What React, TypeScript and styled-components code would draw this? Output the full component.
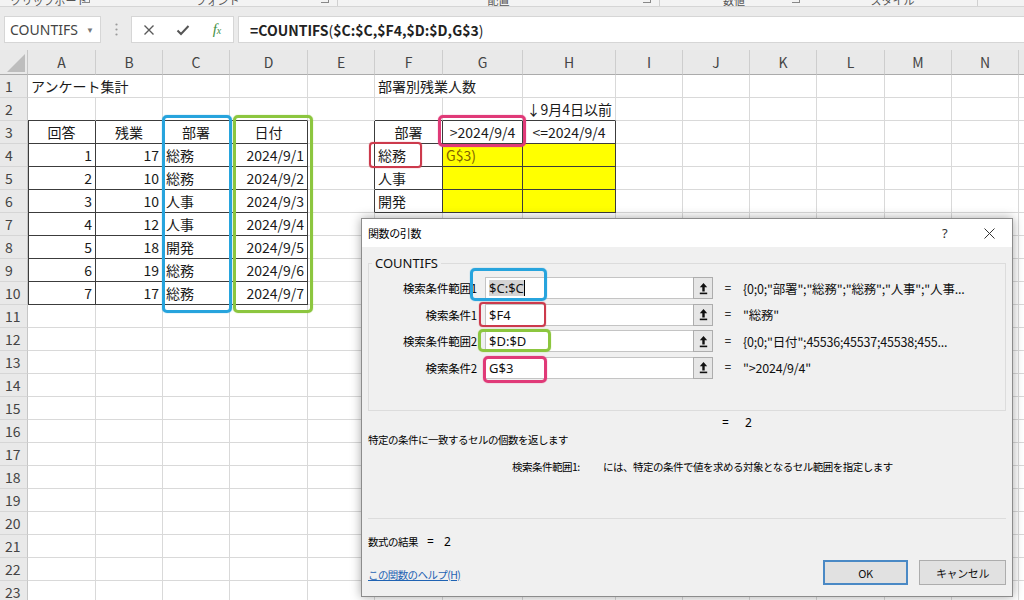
import React from 'react';
import styled, { createGlobalStyle } from 'styled-components';

const GlobalStyle = createGlobalStyle`
  html, body { margin: 0; padding: 0; background: #fff; }
  body { width: 1024px; height: 600px; overflow: hidden; font-family: "Noto Sans CJK JP", "Noto Sans", sans-serif; }
  * { box-sizing: border-box; }
`;

const CJK = `"Noto Sans CJK JP", "Noto Sans", sans-serif`;

const Root = styled.div`
  position: relative;
  width: 1024px;
  height: 600px;
  overflow: hidden;
  background: #fff;
  display: flex;
  flex-direction: column;
`;

/* ---------- ribbon strip (cut off at the top of the shot) ---------- */
const Ribbon = styled.div`
  height: 7px;
  flex: none;
  background: #f3f3f3;
  border-bottom: 1px solid #d5d5d5;
  overflow: hidden;
  display: flex;
  align-items: flex-start;
`;
const RibbonGroup = styled.div<{ $w: number }>`
  width: ${p => p.$w}px;
  flex: none;
  position: relative;
  display: flex;
  justify-content: center;
  border-right: ${p => (p.$w > 150 ? '1px solid #d0d0d0' : 'none')};
  height: 6px;
`;
const RibbonLabel = styled.span`
  font-family: ${CJK};
  font-size: 11px;
  line-height: 12px;
  color: #555;
  margin-top: -6px;
  white-space: nowrap;
`;
const Launcher = styled.span`
  position: absolute;
  right: 8px;
  top: -5px;
  width: 8px;
  height: 8px;
  border-right: 1px solid #888;
  border-bottom: 1px solid #888;
`;

/* ---------- formula bar ---------- */
const FormulaBar = styled.div`
  height: 43px;
  flex: none;
  background: #ebebeb;
  display: flex;
  align-items: stretch;
  padding: 9px 0 7px 4px;
`;
const NameBox = styled.div`
  width: 97px;
  background: #fff;
  border: 1px solid #d6d6d6;
  display: flex;
  align-items: center;
  padding-left: 5px;
  font-family: "Noto Sans", sans-serif;
  font-size: 14px;
  color: #444;
`;
const Caret = styled.span`
  margin-left: auto;
  margin-right: 6px;
  font-size: 8px;
  color: #777;
`;
const Grip = styled.div`
  width: 30px;
  display: flex;
  align-items: center;
  justify-content: center;
`;
const IconBox = styled.div`
  width: 103px;
  background: #fff;
  border: 1px solid #d6d6d6;
  display: flex;
  align-items: center;
  padding-left: 10px;
  gap: 20px;
`;
const IconSlot = styled.span`
  width: 14px;
  height: 16px;
  display: flex;
  align-items: center;
  justify-content: center;
`;
const Fx = styled.span`
  font-family: "Liberation Serif", serif;
  font-style: italic;
  color: #3f8f45;
  font-size: 15px;
  line-height: 16px;
  display: flex;
  align-items: baseline;
`;
const FxSub = styled.span`
  font-size: 10px;
`;
const FormulaInput = styled.div`
  flex: 1;
  margin-left: 4px;
  background: #fff;
  border: 1px solid #d6d6d6;
  border-right: none;
  display: flex;
  align-items: center;
  padding-left: 11px;
  font-family: ${CJK};
  font-size: 14px;
  color: #222;
  white-space: nowrap;
`;
const Strong = styled.span`
  font-weight: 700;
`;

/* ---------- sheet ---------- */
const COLS: [string, number][] = [
  ['A', 68], ['B', 67], ['C', 67], ['D', 78], ['E', 67], ['F', 68], ['G', 80], ['H', 93],
  ['I', 67], ['J', 67], ['K', 67], ['L', 68], ['M', 67], ['N', 67], ['O', 67],
];
const ROWS = 23;

const Sheet = styled.div`
  flex: none;
  display: grid;
  grid-template-columns: 28px ${COLS.map(c => c[1] + 'px').join(' ')};
  grid-template-rows: 25px repeat(${ROWS}, 23px);
  width: ${28 + COLS.reduce((s, c) => s + c[1], 0)}px;
`;
const Corner = styled.div`
  background: #e9e9e9;
  border-right: 1px solid #c6c6c6;
  border-bottom: 1px solid #ababab;
  display: flex;
  align-items: flex-end;
  justify-content: flex-end;
  padding: 0 2px 2px 0;
`;
const ColHead = styled.div`
  background: #e9e9e9;
  border-right: 1px solid #cdcdcd;
  border-bottom: 1px solid #ababab;
  font-family: ${CJK};
  font-size: 14px;
  color: #444;
  display: flex;
  align-items: center;
  justify-content: center;
`;
const RowHead = styled.div`
  background: #e9e9e9;
  border-right: 1px solid #c6c6c6;
  border-bottom: 1px solid #d6d6d6;
  font-family: ${CJK};
  font-size: 14px;
  color: #444;
  display: flex;
  align-items: center;
  padding-left: 5px;
`;
const Cell = styled.div<{
  $align: string; $bg?: string; $br: string; $bb: string; $bl?: boolean; $span?: number; $color?: string;
}>`
  grid-column: span ${p => p.$span || 1};
  background: ${p => p.$bg || 'transparent'};
  border-right: 1px solid ${p => p.$br};
  border-bottom: 1px solid ${p => p.$bb};
  box-shadow: ${p => (p.$bl ? 'inset 1px 0 0 #3c3c3c' : 'none')};
  font-family: ${CJK};
  font-size: 14px;
  line-height: 22px;
  padding: 0 3px;
  text-align: ${p => p.$align};
  white-space: nowrap;
  overflow: hidden;
  color: ${p => p.$color || '#1a1a1a'};
`;

const Mark = styled.div<{ $x: number; $y: number; $w: number; $h: number; $c: string; $b?: number; $r?: number }>`
  position: absolute;
  left: ${p => p.$x}px;
  top: ${p => p.$y}px;
  width: ${p => p.$w}px;
  height: ${p => p.$h}px;
  border: ${p => p.$b || 3}px solid ${p => p.$c};
  border-radius: ${p => p.$r || 5}px;
  box-shadow: 0 0 1px ${p => p.$c};
  pointer-events: none;
`;

/* ---------- dialog ---------- */
const Dialog = styled.div`
  position: absolute;
  left: 361px;
  top: 218px;
  width: 652px;
  height: 379px;
  background: #f0f0f0;
  border: 1px solid #8c8c8c;
  box-shadow: 0 0 10px rgba(0, 0, 0, 0.35);
  display: flex;
  flex-direction: column;
  font-family: ${CJK};
  color: #000;
`;
const TitleBar = styled.div`
  height: 28px;
  flex: none;
  background: #fff;
  display: flex;
  align-items: center;
  padding-left: 6px;
  font-size: 11px;
  letter-spacing: -0.4px;
`;
const TitleBtn = styled.span`
  width: 45px;
  height: 28px;
  display: flex;
  align-items: center;
  justify-content: center;
  font-family: "Noto Sans", sans-serif;
  font-size: 13px;
  color: #333;
`;
const TitleBtns = styled.div`
  margin-left: auto;
  display: flex;
`;
const Body = styled.div`
  flex: 1;
  display: flex;
  flex-direction: column;
  padding: 0 6px 11px 6px;
`;
const Group = styled.fieldset`
  margin: 9px 0 0;
  padding: 0 0 31px;
  border: 1px solid #dcdcdc;
  min-width: 0;
`;
const Legend = styled.legend`
  margin-left: 3px;
  padding: 0 3px;
  font-family: "Noto Sans", sans-serif;
  font-size: 13px;
  line-height: 14px;
  color: #111;
`;
const ArgGrid = styled.div`
  display: grid;
  grid-template-columns: 116px 208px 20px 30px 1fr;
  grid-auto-rows: 22px;
  row-gap: 4.5px;
  padding-top: 7px;
  align-items: center;
`;
const ArgLabel = styled.div`
  text-align: right;
  padding-right: 8px;
  font-size: 11.5px;
  letter-spacing: -0.2px;
  white-space: nowrap;
`;
const ArgInput = styled.div`
  height: 22px;
  background: #fff;
  border: 1px solid #c4c4c4;
  border-right: none;
  display: flex;
  align-items: center;
  padding-left: 3px;
  font-family: "Noto Sans", sans-serif;
  font-size: 13px;
  color: #111;
`;
const Selected = styled.span`
  background: #d4d4d4;
  border-right: 1px solid #000;
  line-height: 16px;
`;
const RefButton = styled.div`
  height: 22px;
  background: #e6e6e6;
  border: 1px solid #adadad;
  display: flex;
  align-items: center;
  justify-content: center;
`;
const Eq = styled.div`
  text-align: center;
  font-family: "Noto Sans", sans-serif;
  font-size: 12px;
  color: #333;
`;
const ArgValue = styled.div`
  font-size: 12.5px;
  letter-spacing: -0.2px;
  white-space: nowrap;
  overflow: hidden;
  color: #111;
`;
const ResultRow = styled.div`
  margin-top: 3px;
  height: 18px;
  display: flex;
  align-items: center;
  gap: 16px;
  padding-left: 354px;
  font-family: "Noto Sans", sans-serif;
  font-size: 12px;
`;
const Note = styled.div`
  height: 16px;
  line-height: 16px;
  font-size: 10.5px;
  letter-spacing: -0.5px;
  white-space: nowrap;
`;
const ArgHelp = styled.div`
  margin-top: 11px;
  height: 16px;
  display: flex;
  align-items: center;
  padding-left: 144px;
  font-size: 10.5px;
  letter-spacing: -0.5px;
  white-space: nowrap;
`;
const ArgHelpName = styled.span`
  width: 91px;
  flex: none;
`;
const Separator = styled.div`
  margin-top: auto;
  height: 1px;
  background: #dcdcdc;
  flex: none;
`;
const FormulaResult = styled.div`
  margin-top: 14px;
  height: 16px;
  display: flex;
  align-items: center;
  font-size: 10.5px;
  letter-spacing: -0.5px;
  white-space: nowrap;
`;
const ResultEq = styled.span`
  font-family: "Noto Sans", sans-serif;
  font-size: 12px;
  letter-spacing: 0;
  margin-left: 9px;
`;
const ResultNum = styled.span`
  font-family: "Noto Sans", sans-serif;
  font-size: 12px;
  letter-spacing: 0;
  margin-left: 10px;
`;
const BottomRow = styled.div`
  margin-top: 11px;
  height: 25px;
  display: flex;
  align-items: center;
`;
const HelpLink = styled.a`
  color: #1f63b3;
  text-decoration: underline;
  font-size: 10.5px;
  letter-spacing: -0.6px;
  margin-top: 4px;
`;
const Buttons = styled.div`
  margin-left: auto;
  display: flex;
  gap: 11px;
`;
const DlgButton = styled.button<{ $primary?: boolean }>`
  width: ${p => (p.$primary ? 85 : 87)}px;
  height: 25px;
  background: #e1e1e1;
  border: ${p => (p.$primary ? '2px solid #4a89c5' : '1px solid #adadad')};
  font-family: ${CJK};
  font-size: 11px;
  letter-spacing: -0.4px;
  color: #111;
  padding: 0;
`;

/* ---------- data ---------- */
type CellData = { t: string; a?: 'left' | 'right' | 'center'; color?: string; span?: number };
const data: Record<string, CellData> = {
  A1: { t: 'アンケート集計', span: 2 },
  F1: { t: '部署別残業人数', span: 2 },
  H2: { t: '↓9月4日以前', a: 'right' },
  A3: { t: '回答', a: 'center' },
  B3: { t: '残業', a: 'center' },
  C3: { t: '部署', a: 'center' },
  D3: { t: '日付', a: 'center' },
  F3: { t: '部署', a: 'center' },
  G3: { t: '>2024/9/4', a: 'center' },
  H3: { t: '<=2024/9/4', a: 'center' },
  F4: { t: '総務' },
  F5: { t: '人事' },
  F6: { t: '開発' },
  G4: { t: 'G$3)', color: '#7d6200' },
};
const rows: [number, number, string, string][] = [
  [1, 17, '総務', '2024/9/1'],
  [2, 10, '総務', '2024/9/2'],
  [3, 10, '人事', '2024/9/3'],
  [4, 12, '人事', '2024/9/4'],
  [5, 18, '開発', '2024/9/5'],
  [6, 19, '総務', '2024/9/6'],
  [7, 17, '総務', '2024/9/7'],
];
rows.forEach((r, i) => {
  const n = i + 4;
  data['A' + n] = { t: String(r[0]), a: 'right' };
  data['B' + n] = { t: String(r[1]), a: 'right' };
  data['C' + n] = { t: r[2] };
  data['D' + n] = { t: r[3], a: 'right' };
});

const boxed = (c: number, r: number) =>
  (c >= 0 && c <= 3 && r >= 3 && r <= 10) || (c >= 5 && c <= 7 && r >= 3 && r <= 6);
const yellow = (c: number, r: number) => c >= 6 && c <= 7 && r >= 4 && r <= 6;

const GRID = '#d9d9d9';
const DARK = '#3c3c3c';

const XIcon = () => (
  <svg width="12" height="12" viewBox="0 0 12 12">
    <path d="M1.5 1.5 L10.5 10.5 M10.5 1.5 L1.5 10.5" stroke="#5a5a5a" strokeWidth="1.4" fill="none" />
  </svg>
);
const CheckIcon = () => (
  <svg width="14" height="12" viewBox="0 0 14 12">
    <path d="M1.5 6.5 L5 10 L12.5 2" stroke="#555" strokeWidth="2" fill="none" />
  </svg>
);
const RefIcon = () => (
  <svg width="9" height="13" viewBox="0 0 9 13">
    <path d="M4.5 1 L8.2 5.2 H5.7 V9.5 H3.3 V5.2 H0.8 Z" fill="#111" />
    <rect x="0.8" y="10.6" width="7.4" height="1.6" fill="#111" />
  </svg>
);
const CloseIcon = () => (
  <svg width="11" height="11" viewBox="0 0 11 11">
    <path d="M0.5 0.5 L10.5 10.5 M10.5 0.5 L0.5 10.5" stroke="#333" strokeWidth="1" fill="none" />
  </svg>
);

const args: { label: string; value: React.ReactNode; result: string }[] = [
  { label: '検索条件範囲1', value: <Selected>$C:$C</Selected>, result: '{0;0;"部署";"総務";"総務";"人事";"人事...' },
  { label: '検索条件1', value: '$F4', result: '"総務"' },
  { label: '検索条件範囲2', value: '$D:$D', result: '{0;0;"日付";45536;45537;45538;455...' },
  { label: '検索条件2', value: 'G$3', result: '">2024/9/4"' },
];

export default function App() {
  const cells: React.ReactNode[] = [];
  cells.push(
    <Corner key="corner">
      <svg width="18" height="18" viewBox="0 0 18 18">
        <path d="M18 0 L18 18 L0 18 Z" fill="#bdbdbd" />
      </svg>
    </Corner>
  );
  COLS.forEach(([name]) => cells.push(<ColHead key={'h' + name}>{name}</ColHead>));
  for (let r = 1; r <= ROWS; r++) {
    cells.push(<RowHead key={'r' + r}>{r}</RowHead>);
    let skip = 0;
    COLS.forEach(([name], c) => {
      if (skip > 0) {
        skip--;
        return;
      }
      const d = data[name + r];
      const span = d?.span || 1;
      skip = span - 1;
      const lastC = c + span - 1;
      const br = boxed(lastC, r) || boxed(lastC + 1, r) ? DARK : GRID;
      const bb = boxed(c, r) || boxed(c, r + 1) ? DARK : GRID;
      cells.push(
        <Cell
          key={name + r}
          $span={span}
          $align={d?.a || 'left'}
          $bg={yellow(c, r) ? '#ffff00' : undefined}
          $br={br}
          $bb={bb}
          $bl={c === 0 && boxed(0, r)}
          $color={d?.color}
        >
          {d?.t || ''}
        </Cell>
      );
    });
  }

  return (
    <>
      <GlobalStyle />
      <Root>
        <Ribbon>
          <RibbonGroup $w={98}>
            <RibbonLabel>クリップボード</RibbonLabel>
            <Launcher />
          </RibbonGroup>
          <RibbonGroup $w={240}>
            <RibbonLabel>フォント</RibbonLabel>
            <Launcher />
          </RibbonGroup>
          <RibbonGroup $w={322}>
            <RibbonLabel>配置</RibbonLabel>
            <Launcher />
          </RibbonGroup>
          <RibbonGroup $w={148}>
            <RibbonLabel>数値</RibbonLabel>
            <Launcher />
          </RibbonGroup>
          <RibbonGroup $w={170}>
            <RibbonLabel>スタイル</RibbonLabel>
          </RibbonGroup>
        </Ribbon>
        <FormulaBar>
          <NameBox>
            COUNTIFS
            <Caret>▼</Caret>
          </NameBox>
          <Grip>
            <svg width="3" height="13" viewBox="0 0 3 13">
              <circle cx="1.5" cy="1.5" r="1.1" fill="#9a9a9a" />
              <circle cx="1.5" cy="6.5" r="1.1" fill="#9a9a9a" />
              <circle cx="1.5" cy="11.5" r="1.1" fill="#9a9a9a" />
            </svg>
          </Grip>
          <IconBox>
            <IconSlot><XIcon /></IconSlot>
            <IconSlot><CheckIcon /></IconSlot>
            <IconSlot>
              <Fx>f<FxSub>x</FxSub></Fx>
            </IconSlot>
          </IconBox>
          <FormulaInput>
            <Strong>=COUNTIFS</Strong>(<Strong>$C:$C,$F4,$D:$D,G$3</Strong>)
          </FormulaInput>
        </FormulaBar>
        <Sheet>{cells}</Sheet>

        <Mark $x={162} $y={115} $w={70} $h={198} $c="#27a4dd" />
        <Mark $x={233} $y={115} $w={80} $h={198} $c="#8cc63f" />
        <Mark $x={438} $y={115} $w={88} $h={32} $c="#e03a78" />
        <Mark $x={369} $y={142} $w={53} $h={26} $c="#cc3a4c" $b={2} $r={4} />

        <Dialog>
          <TitleBar>
            関数の引数
            <TitleBtns>
              <TitleBtn>?</TitleBtn>
              <TitleBtn><CloseIcon /></TitleBtn>
            </TitleBtns>
          </TitleBar>
          <Body>
            <Group>
              <Legend>COUNTIFS</Legend>
              <ArgGrid>
                {args.map(a => (
                  <React.Fragment key={a.label}>
                    <ArgLabel>{a.label}</ArgLabel>
                    <ArgInput>{a.value}</ArgInput>
                    <RefButton><RefIcon /></RefButton>
                    <Eq>=</Eq>
                    <ArgValue>{a.result}</ArgValue>
                  </React.Fragment>
                ))}
              </ArgGrid>
            </Group>
            <ResultRow>
              <span>=</span>
              <span>2</span>
            </ResultRow>
            <Note>特定の条件に一致するセルの個数を返します</Note>
            <ArgHelp>
              <ArgHelpName>検索条件範囲1:</ArgHelpName>
              には、特定の条件で値を求める対象となるセル範囲を指定します
            </ArgHelp>
            <Separator />
            <FormulaResult>
              数式の結果<ResultEq>=</ResultEq><ResultNum>2</ResultNum>
            </FormulaResult>
            <BottomRow>
              <HelpLink>この関数のヘルプ(H)</HelpLink>
              <Buttons>
                <DlgButton $primary>OK</DlgButton>
                <DlgButton>キャンセル</DlgButton>
              </Buttons>
            </BottomRow>
          </Body>
          <Mark $x={108} $y={49} $w={77} $h={33} $c="#27a4dd" />
          <Mark $x={117} $y={83} $w={67} $h={25} $c="#cc3a4c" $b={2} $r={4} />
          <Mark $x={116} $y={110} $w={73} $h={23} $c="#8cc63f" />
          <Mark $x={121} $y={137} $w={64} $h={27} $c="#e03a78" />
        </Dialog>
      </Root>
    </>
  );
}
